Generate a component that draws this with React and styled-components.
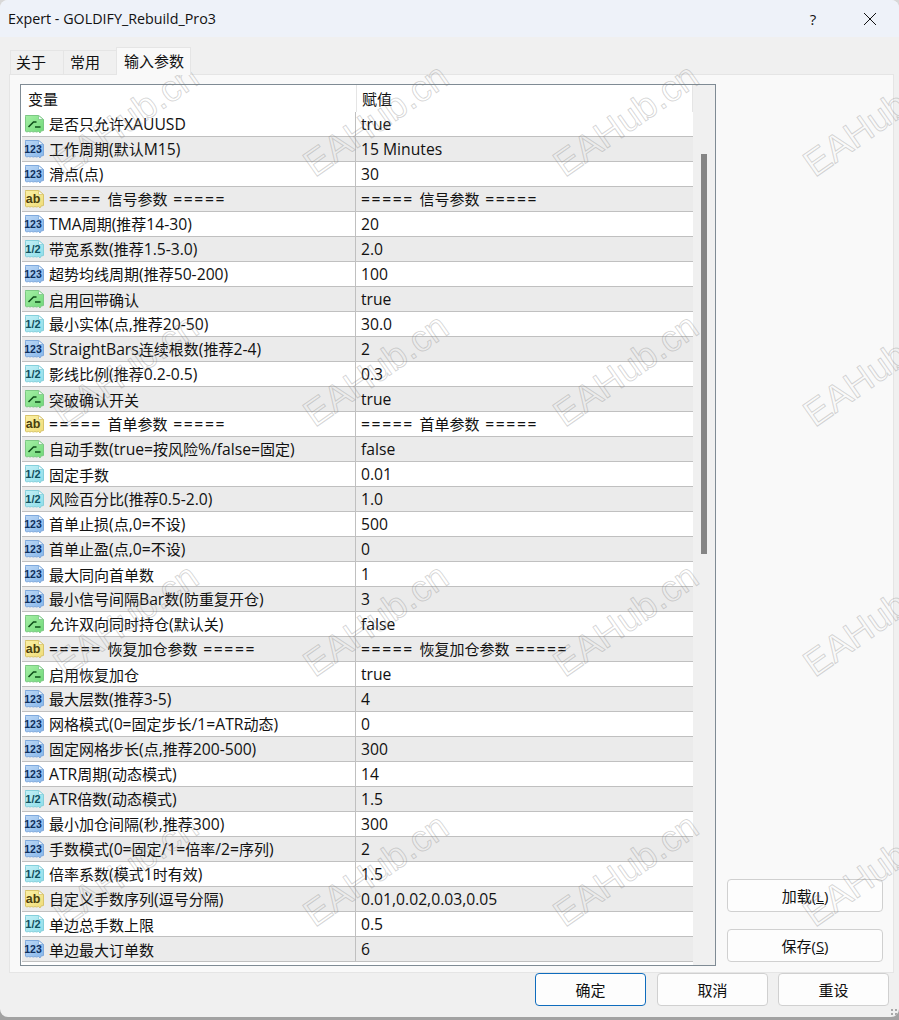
import React from "react";
import styled, { createGlobalStyle } from "styled-components";

const GlobalStyle = createGlobalStyle`
  html, body {
    margin: 0;
    padding: 0;
    background: linear-gradient(#d8d8d8 0 900px, #a2a2a2 900px);
  }
  body {
    width: 899px;
    height: 1020px;
    overflow: hidden;
    font-family: "Open Sans", "Noto Sans CJK SC", sans-serif;
    color: #111;
  }
`;

const Dialog = styled.div`
  position: relative;
  width: 899px;
  height: 1017px;
  background: #f0f0f0;
  border-radius: 8px;
  overflow: hidden;
  display: flex;
  flex-direction: column;
`;

const TitleBar = styled.div`
  height: 37px;
  flex: none;
  background: #eef2f9;
  display: flex;
  align-items: center;
  padding-left: 8px;
  font-size: 14.3px;
`;

const TitleText = styled.div`
  flex: 1;
`;

const TitleButton = styled.div`
  width: ${(p) => p.$w}px;
  height: 37px;
  display: flex;
  align-items: center;
  justify-content: center;
  font-size: 15px;
`;

const TabStrip = styled.div`
  display: flex;
  align-items: flex-end;
  height: 38px;
  flex: none;
  padding-left: 10px;
  position: relative;
  z-index: 1;
  margin-bottom: -1px;
`;

const Tab = styled.div`
  width: ${(p) => p.$w}px;
  height: ${(p) => (p.$active ? 28 : 25)}px;
  padding-left: ${(p) => p.$pl}px;
  padding-bottom: ${(p) => (p.$active ? 3 : 2)}px;
  box-sizing: border-box;
  display: flex;
  align-items: center;
  font-size: 15px;
  background: ${(p) => (p.$active ? "#f9f9f9" : "#f0f0f0")};
  border: 1px solid #e5e5e5;
  border-bottom: ${(p) => (p.$active ? "none" : "1px solid #e5e5e5")};
  margin-right: -1px;
`;

const Panel = styled.div`
  margin-left: 9px;
  width: 885px;
  height: 899px;
  flex: none;
  box-sizing: border-box;
  background: #f9f9f9;
  border: 1px solid #e5e5e5;
  padding: 9px 10px;
  display: flex;
  gap: 11px;
`;

const ListBox = styled.div`
  width: 696px;
  height: 882px;
  flex: none;
  box-sizing: border-box;
  background: #fff;
  border: 1px solid #7f8b94;
  padding: 0 0 0 1px;
  display: flex;
  overflow: hidden;
`;

const ListBody = styled.div`
  width: 671px;
  flex: none;
`;

const HeaderRow = styled.div`
  display: grid;
  grid-template-columns: 334px 1fr;
  height: 27px;
  font-size: 15px;
  border-right: 1px solid #e5e5e5;
`;

const HeaderCell = styled.div`
  padding-left: ${(p) => (p.$sep ? 5 : 6)}px;
  box-sizing: border-box;
  display: flex;
  align-items: center;
  border-left: ${(p) => (p.$sep ? "1px solid #e5e5e5" : "none")};
`;

const Row = styled.div`
  display: grid;
  grid-template-columns: 334px 1fr;
  height: 25px;
  box-sizing: border-box;
  background: ${(p) => (p.$alt ? "#ebebeb" : "#fff")};
  border-bottom: 1px solid #c0c0c0;
  font-size: 15px;
  align-items: center;
`;

const NameCell = styled.div`
  display: flex;
  align-items: center;
  padding-left: 1px;
  height: 100%;
  border-right: 1px solid #c0c0c0;
  white-space: nowrap;
`;

const NameText = styled.span`
  margin-left: 4px;
`;

const ValueCell = styled.div`
  padding-left: 5px;
  white-space: nowrap;
`;

const Latin = styled.span`
  font-size: 15.7px;
  letter-spacing: ${(p) => (p.$rule ? "1.6px" : "0")};
`;

const ScrollTrack = styled.div`
  width: 22px;
  flex: none;
  background: #f0f0f0;
  padding-top: 69px;
  display: flex;
  justify-content: center;
`;

const ScrollThumb = styled.div`
  width: 6px;
  height: 400px;
  background: #858585;
`;

const SideColumn = styled.div`
  flex: 1;
  display: flex;
  flex-direction: column;
  justify-content: flex-end;
  align-items: flex-end;
  gap: 17px;
  padding: 0 0 1px;
`;

const PushButton = styled.div`
  width: ${(p) => p.$w || 111}px;
  height: 33px;
  flex: none;
  margin-right: ${(p) => p.$mr || 0}px;
  box-sizing: border-box;
  display: flex;
  align-items: center;
  justify-content: center;
  background: #fdfdfd;
  border: 1px solid ${(p) => (p.$primary ? "#0f6cbd" : "#d0d0d0")};
  border-radius: 4px;
  font-size: 15px;
`;

const Key = styled.span`
  text-decoration: underline;
`;

const Footer = styled.div`
  flex: 1;
  display: flex;
  justify-content: flex-end;
  gap: 10px;
  padding-right: 10px;
  align-items: flex-start;
`;

const Grip = styled.div`
  position: absolute;
  right: 1px;
  bottom: 1px;
  width: 8px;
  height: 8px;
  background-image: radial-gradient(#a8a8a8 1px, transparent 1.2px);
  background-size: 4px 4px;
`;

const WatermarkLayer = styled.div`
  position: absolute;
  inset: 0;
  overflow: hidden;
  pointer-events: none;
`;

const Watermark = styled.div`
  position: absolute;
  left: ${(p) => p.$x}px;
  top: ${(p) => p.$y}px;
  font-family: "Liberation Sans", sans-serif;
  font-size: 37px;
  line-height: 46px;
  white-space: nowrap;
  color: transparent;
  -webkit-text-stroke: 1px rgba(130, 130, 130, 0.32);
  transform: rotate(-35deg);
  transform-origin: left bottom;
`;

const iconColors = {
  bool: { light: "#a6f0a6", dark: "#6fd878", edge: "#7cc884", ink: "#0e4f1a" },
  int: { light: "#bcd8f6", dark: "#86b6ea", edge: "#7fa9dc", ink: "#0e2f5e" },
  half: { light: "#c4f1f7", dark: "#8cdce8", edge: "#84cfdb", ink: "#10505e" },
  text: { light: "#fbf0a4", dark: "#efdc78", edge: "#d8c46a", ink: "#4a3f0e" },
};

const iconLabels = { int: "123", half: "1/2", text: "ab" };

// ticket shaped type icon: folded top right corner, torn lower edge
const TypeIcon = ({ kind }) => {
  const c = iconColors[kind];
  const id = `grad-${kind}`;
  return (
    <svg width="22" height="22" viewBox="0 0 22 22" style={{ flex: "none" }}>
      <defs>
        <linearGradient id={id} x1="0" y1="0" x2="1" y2="1">
          <stop offset="0" stopColor={c.light} />
          <stop offset="1" stopColor={c.dark} />
        </linearGradient>
      </defs>
      <path
        d="M2.5 2.5h13l5 4v11l-2.5 .5-1 2-1.5-1.5-2 .5-1.5-.5-1.5 .5-2-.5-1.5 .5-1.5-.5-2 .5-1-1V3.5a1 1 0 0 1 1-1z"
        fill={`url(#${id})`}
        stroke={c.edge}
      />
      <path d="M15.5 2.5v4h5z" fill="#f4f8fb" stroke={c.edge} strokeWidth="0.8" />
      {kind === "bool" ? (
        <path d="M5.5 14l5-5h3M12 14h5.5" fill="none" stroke={c.ink} strokeWidth="1.6" />
      ) : (
        <text
          x="10"
          y="15"
          fontSize={kind === "text" ? 12.5 : kind === "half" ? 11 : 10.5}
          fontWeight="700"
          fontFamily="Liberation Sans"
          textAnchor="middle"
          fill={c.ink}
        >
          {iconLabels[kind]}
        </text>
      )}
    </svg>
  );
};

// Latin runs sit a little larger than the CJK ones, the = rules are wider still
const Mixed = ({ text }) =>
  text.split(/([\x20-\x7e]+)/).map((part, i) =>
    /^[\x20-\x7e]+$/.test(part) ? (
      <Latin key={i} $rule={part.includes("=====")}>
        {part}
      </Latin>
    ) : (
      part
    )
  );

const rows = [
  ["bool", "是否只允许XAUUSD", "true"],
  ["int", "工作周期(默认M15)", "15 Minutes"],
  ["int", "滑点(点)", "30"],
  ["text", "===== 信号参数 =====", "===== 信号参数 ====="],
  ["int", "TMA周期(推荐14-30)", "20"],
  ["half", "带宽系数(推荐1.5-3.0)", "2.0"],
  ["int", "超势均线周期(推荐50-200)", "100"],
  ["bool", "启用回带确认", "true"],
  ["half", "最小实体(点,推荐20-50)", "30.0"],
  ["int", "StraightBars连续根数(推荐2-4)", "2"],
  ["half", "影线比例(推荐0.2-0.5)", "0.3"],
  ["bool", "突破确认开关", "true"],
  ["text", "===== 首单参数 =====", "===== 首单参数 ====="],
  ["bool", "自动手数(true=按风险%/false=固定)", "false"],
  ["half", "固定手数", "0.01"],
  ["half", "风险百分比(推荐0.5-2.0)", "1.0"],
  ["int", "首单止损(点,0=不设)", "500"],
  ["int", "首单止盈(点,0=不设)", "0"],
  ["int", "最大同向首单数", "1"],
  ["int", "最小信号间隔Bar数(防重复开仓)", "3"],
  ["bool", "允许双向同时持仓(默认关)", "false"],
  ["text", "===== 恢复加仓参数 =====", "===== 恢复加仓参数 ====="],
  ["bool", "启用恢复加仓", "true"],
  ["int", "最大层数(推荐3-5)", "4"],
  ["int", "网格模式(0=固定步长/1=ATR动态)", "0"],
  ["int", "固定网格步长(点,推荐200-500)", "300"],
  ["int", "ATR周期(动态模式)", "14"],
  ["half", "ATR倍数(动态模式)", "1.5"],
  ["int", "最小加仓间隔(秒,推荐300)", "300"],
  ["int", "手数模式(0=固定/1=倍率/2=序列)", "2"],
  ["half", "倍率系数(模式1时有效)", "1.5"],
  ["text", "自定义手数序列(逗号分隔)", "0.01,0.02,0.03,0.05"],
  ["half", "单边总手数上限", "0.5"],
  ["int", "单边最大订单数", "6"],
];

const marks = [];
[141, 391, 641, 891].forEach((y) => {
  [71, 321, 571, 821].forEach((x) => marks.push({ x, y }));
});

export default function App() {
  return (
    <>
      <GlobalStyle />
      <Dialog>
        <TitleBar>
          <TitleText>Expert - GOLDIFY_Rebuild_Pro3</TitleText>
          <TitleButton $w={56}>?</TitleButton>
          <TitleButton $w={58}>
            <svg width="14" height="14" viewBox="0 0 14 14">
              <path d="M1 1l12 12M13 1L1 13" stroke="#111" strokeWidth="1" fill="none" />
            </svg>
          </TitleButton>
        </TitleBar>
        <TabStrip>
          <Tab $w={54} $pl={5}>关于</Tab>
          <Tab $w={54} $pl={6}>常用</Tab>
          <Tab $w={75} $pl={7} $active>输入参数</Tab>
        </TabStrip>
        <Panel>
          <ListBox>
            <ListBody>
              <HeaderRow>
                <HeaderCell>变量</HeaderCell>
                <HeaderCell $sep>赋值</HeaderCell>
              </HeaderRow>
              {rows.map(([kind, name, value], i) => (
                <Row key={i} $alt={i % 2 === 1}>
                  <NameCell>
                    <TypeIcon kind={kind} />
                    <NameText>
                      <Mixed text={name} />
                    </NameText>
                  </NameCell>
                  <ValueCell>
                    <Mixed text={value} />
                  </ValueCell>
                </Row>
              ))}
            </ListBody>
            <ScrollTrack>
              <ScrollThumb />
            </ScrollTrack>
          </ListBox>
          <SideColumn>
            <PushButton $w={156}>
              加载(<Key>L</Key>)
            </PushButton>
            <PushButton $w={156}>
              保存(<Key>S</Key>)
            </PushButton>
          </SideColumn>
        </Panel>
        <Footer>
          <PushButton $primary $mr={1}>确定</PushButton>
          <PushButton>取消</PushButton>
          <PushButton>重设</PushButton>
        </Footer>
        <WatermarkLayer>
          {marks.map((m, i) => (
            <Watermark key={i} $x={m.x} $y={m.y}>
              EAHub.cn
            </Watermark>
          ))}
        </WatermarkLayer>
        <Grip />
      </Dialog>
    </>
  );
}
